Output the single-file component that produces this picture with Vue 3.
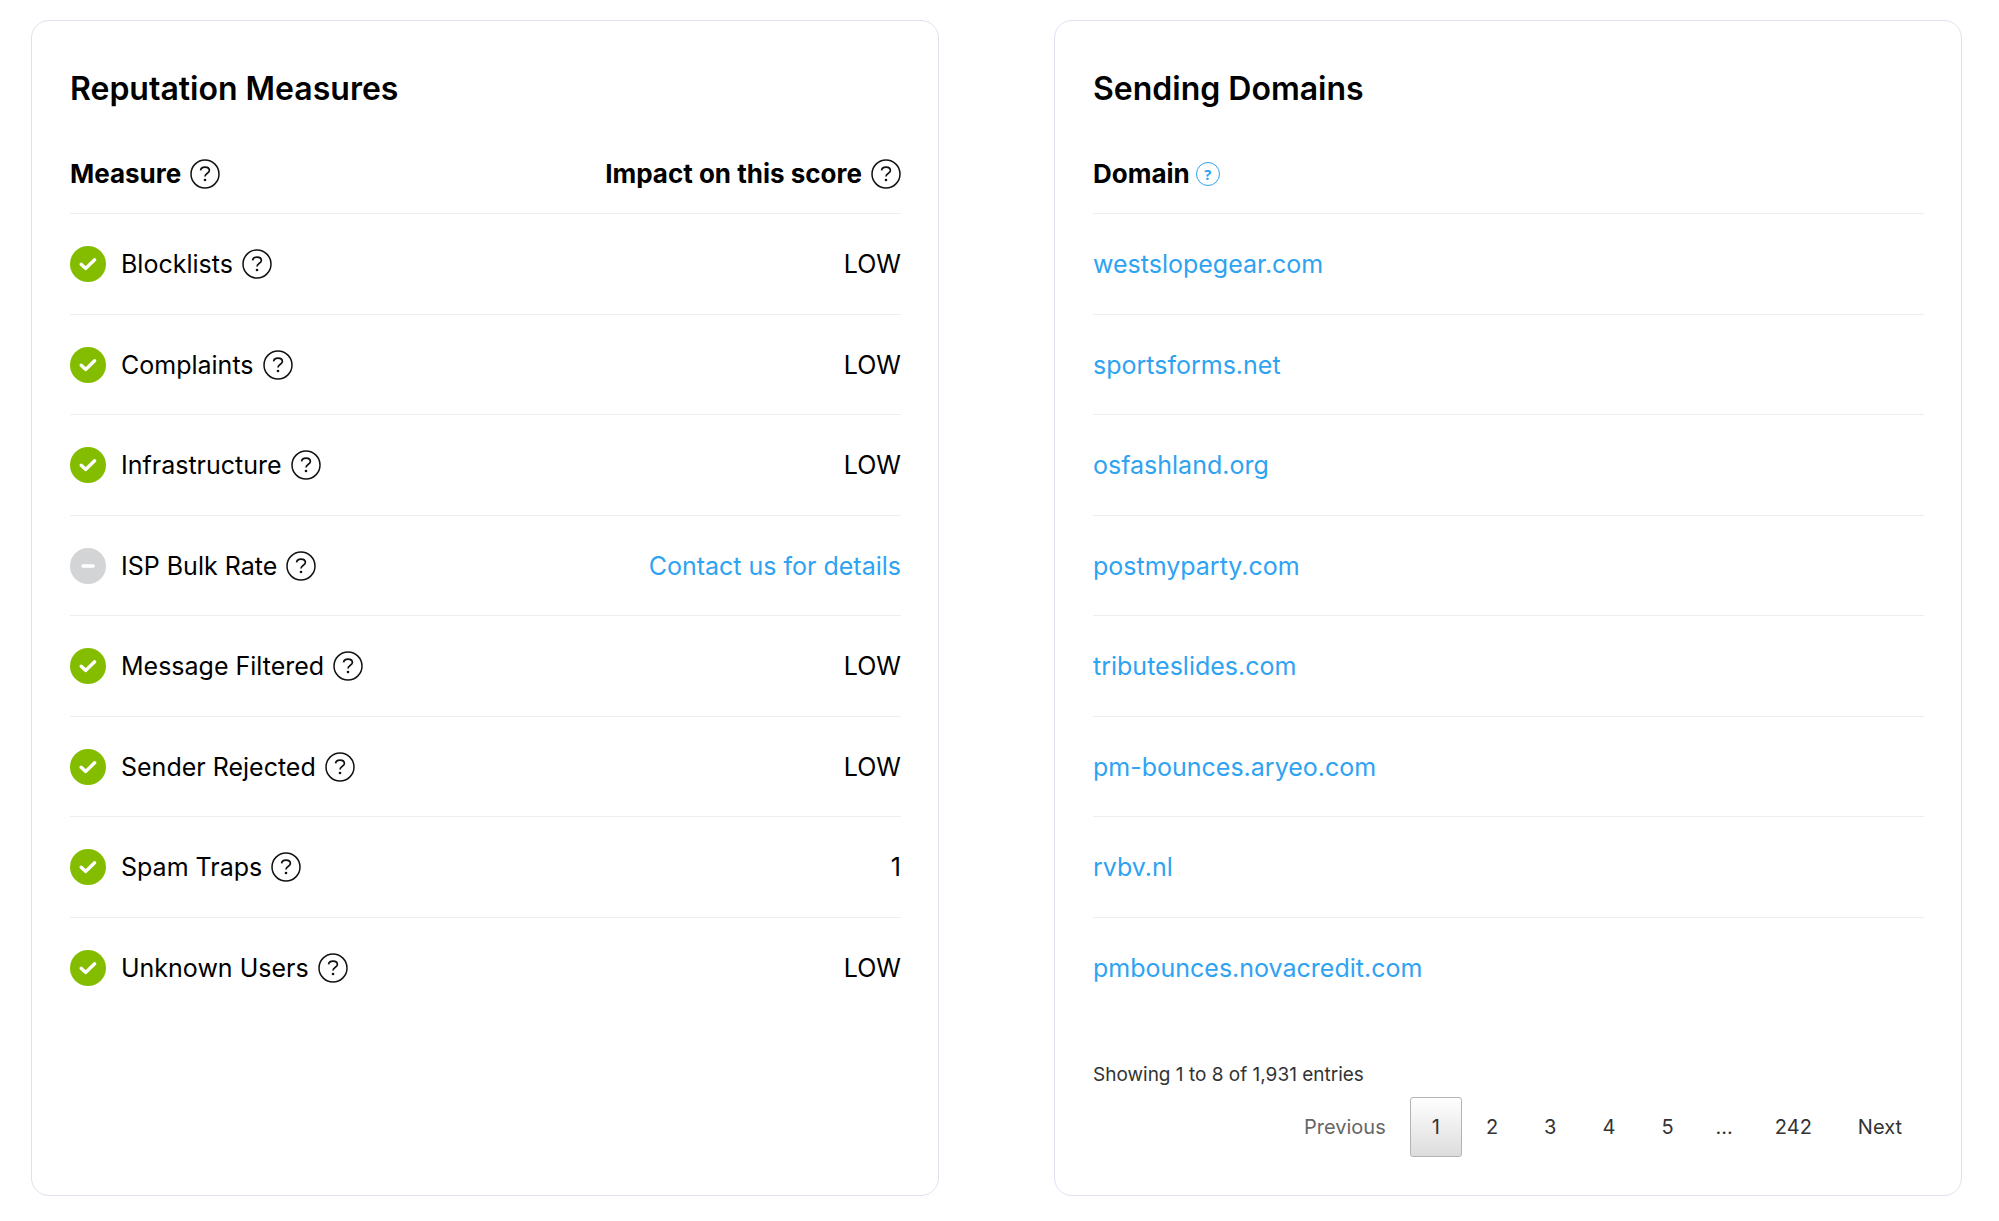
<script setup>
  import { ref } from 'vue';
  const measures = ref([
    { name: 'Blocklists', impact: 'LOW', ok: true },
    { name: 'Complaints', impact: 'LOW', ok: true },
    { name: 'Infrastructure', impact: 'LOW', ok: true },
    { name: 'ISP Bulk Rate', impact: '', ok: false },
    { name: 'Message Filtered', impact: 'LOW', ok: true },
    { name: 'Sender Rejected', impact: 'LOW', ok: true },
    { name: 'Spam Traps', impact: '1', ok: true },
    { name: 'Unknown Users', impact: 'LOW', ok: true },
  ]);
  const domains = [
    'westslopegear.com',
    'sportsforms.net',
    'osfashland.org',
    'postmyparty.com',
    'tributeslides.com',
    'pm-bounces.aryeo.com',
    'rvbv.nl',
    'pmbounces.novacredit.com',
  ];
  const pages = [1, 2, 3, 4, 5, '...', 242];
  let currentPage = ref(1);
  function pageEvent(page){
    currentPage.value = page;
  }
</script>

<template>
  <svg class="sprite" aria-hidden="true">
    <symbol id="icon-help" viewBox="0 0 30 30">
      <circle cx="15" cy="15" r="14" fill="none" stroke="currentColor" stroke-width="1.5" />
      <path d="M10.6 11.4C10.8 9.2 12.6 8.1 15 8.1C17.5 8.1 19.4 9.4 19.4 11.5C19.4 14.4 15 14 15 17.6" fill="none" stroke="currentColor" stroke-width="1.7" />
      <circle cx="15" cy="21" r="1.3" fill="currentColor" />
    </symbol>
  </svg>
  <main class="report">
    <section class="card">
      <h2>Reputation Measures</h2>
      <table>
        <thead>
          <tr>
            <th scope="col">
              <div class="cell">
                Measure
                <button class="help" aria-label="About measures"><svg><use href="#icon-help" /></svg></button>
              </div>
            </th>
            <th scope="col">
              <div class="cell cell--right">
                Impact on this score
                <button class="help" aria-label="About the impact"><svg><use href="#icon-help" /></svg></button>
              </div>
            </th>
          </tr>
        </thead>
        <tbody>
          <tr v-for="item in measures" :key="item.name">
            <td>
              <div class="cell">
                <svg class="status" :class="{'status--none': !item.ok}" viewBox="0 0 36 36" aria-hidden="true">
                  <circle cx="18" cy="18" r="18" fill="currentColor" />
                  <path v-if="item.ok" d="M11.2 18.2L15.8 22.4L24.6 13.8" />
                  <path v-else d="M13 18H23.2" />
                </svg>
                {{item.name}}
                <button class="help" :aria-label="'About ' + item.name"><svg><use href="#icon-help" /></svg></button>
              </div>
            </td>
            <td class="impact">
              <a v-if="!item.ok" href="#contact">Contact us for details</a>
              <template v-else>{{item.impact}}</template>
            </td>
          </tr>
        </tbody>
      </table>
    </section>

    <section class="card">
      <h2>Sending Domains</h2>
      <table>
        <thead>
          <tr>
            <th scope="col">
              <div class="cell cell--domain">
                Domain
                <button class="tip" aria-label="About domains">?</button>
              </div>
            </th>
          </tr>
        </thead>
        <tbody>
          <tr v-for="domain in domains" :key="domain">
            <td><a :href="'#' + domain">{{domain}}</a></td>
          </tr>
        </tbody>
      </table>
      <p class="info">Showing 1 to 8 of 1,931 entries</p>
      <nav class="pager" aria-label="Pages">
        <button class="pager-button" disabled>Previous</button>
        <template v-for="page in pages" :key="page">
          <span v-if="page === '...'" class="pager-gap">...</span>
          <button v-else class="pager-button" :class="{'pager-button--current': page === currentPage}" @click="pageEvent(page)">{{page}}</button>
        </template>
        <button class="pager-button">Next</button>
      </nav>
    </section>
  </main>
</template>

<style>
body{
  background-color:#fff;
}
</style>

<style scoped>
.sprite{
  display:none;
}
.report{
  display:grid;
  grid-template-columns:1fr 1fr;
  gap:115px;
  padding:20px 37px 26px 31px;
  font-family:Inter, "Liberation Sans", sans-serif;
  font-size:26px;
  color:#000;
}
.card{
  border:1px solid #dfe1f0;
  border-radius:18px;
  padding:46px 37px 38px 38px;
}
h2{
  margin:0 0 23px;
  font-size:32px;
  line-height:44px;
  font-weight:600;
}
table{
  width:100%;
  border-collapse:separate;
  border-spacing:0;
}
th, td{
  height:101px;
  box-sizing:border-box;
  padding:0;
  text-align:left;
  vertical-align:middle;
  border-bottom:1px solid #eee;
}
th{
  height:80px;
  font-weight:700;
}
td{
  font-size:25px;
}
tbody tr:nth-child(even) td{
  height:100px;
}
tbody tr:last-child td{
  border-bottom:none;
}
a{
  color:#2ea3f2;
  text-decoration:none;
}
button{
  font-family:inherit;
  cursor:pointer;
}
.cell{
  display:flex;
  align-items:center;
  gap:9px;
}
.cell--right{
  justify-content:flex-end;
}
.cell--domain{
  gap:6px;
}
.impact{
  text-align:right;
}
.status{
  width:36px;
  height:36px;
  margin-right:6px;
  color:#84bd00;
}
.status--none{
  color:#d3d4d6;
}
.status path{
  fill:none;
  stroke:#fff;
  stroke-width:3.4;
  stroke-linecap:round;
  stroke-linejoin:round;
}
.help{
  width:30px;
  height:30px;
  padding:0;
  border:none;
  background:none;
  color:#111;
}
.help svg{
  display:block;
  width:30px;
  height:30px;
}
.tip{
  width:24px;
  height:24px;
  padding:0;
  border:1px solid #2ea3f2;
  border-radius:50%;
  background:none;
  color:#2ea3f2;
  font-family:"Open Sans", sans-serif;
  font-size:15px;
  line-height:20px;
  font-weight:700;
}
.info{
  margin:41px 0 6px;
  font-size:19px;
  line-height:32px;
  color:#333;
}
.pager{
  display:flex;
  justify-content:flex-end;
  gap:2px;
}
.pager-button{
  height:60px;
  padding:0 21px;
  border:1px solid transparent;
  border-radius:3px;
  background:none;
  font-size:20px;
  color:#333;
}
.pager-button:disabled{
  color:#666;
  cursor:default;
}
.pager-button--current{
  border-color:#b3b3b3;
  background:linear-gradient(#fff, #dcdcdc);
}
.pager-gap{
  padding:0 18px;
  font-size:20px;
  line-height:60px;
  color:#333;
}
</style>
